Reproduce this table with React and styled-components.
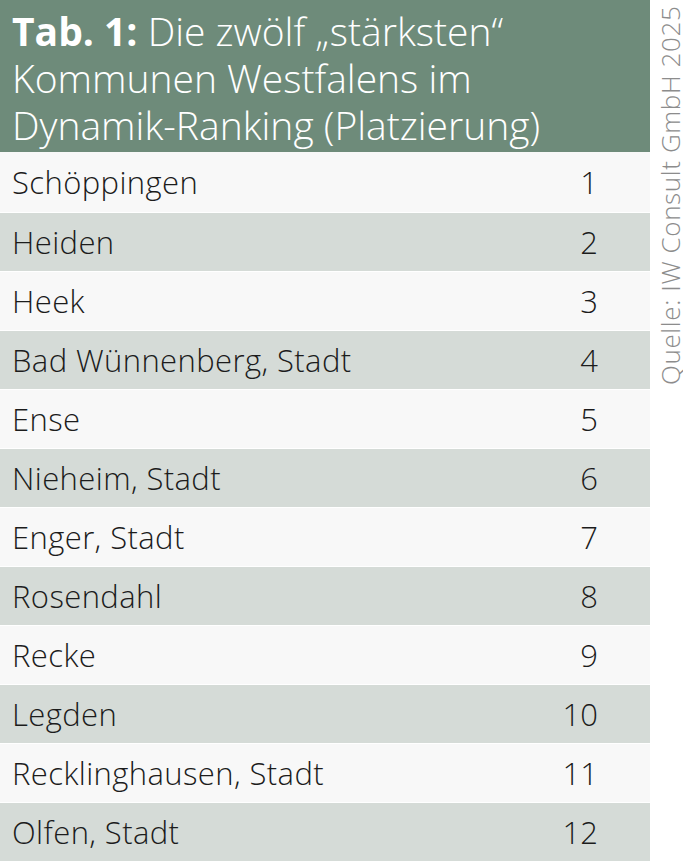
import React from "react";
import styled, { createGlobalStyle } from "styled-components";

const GlobalStyle = createGlobalStyle`
  html, body {
    margin: 0;
    padding: 0;
    background: #ffffff;
  }
  body {
    font-family: "Open Sans", "Liberation Sans", sans-serif;
  }
`;

// Kommunen mit Platzierung
const ranking = [
  "Schöppingen",
  "Heiden",
  "Heek",
  "Bad Wünnenberg, Stadt",
  "Ense",
  "Nieheim, Stadt",
  "Enger, Stadt",
  "Rosendahl",
  "Recke",
  "Legden",
  "Recklinghausen, Stadt",
  "Olfen, Stadt",
];

const App = () => {
  return (
    <>
      <GlobalStyle />
      <Page>
        <Table>
          <Header>
            <b>Tab. 1:</b> Die zwölf „stärksten“ Kommunen Westfalens im
            Dynamik-Ranking (Platzierung)
          </Header>
          {ranking.map((name, i) => (
            <Row key={name} $shaded={i % 2 === 1}>
              <Name>{name}</Name>
              <Rank>{i + 1}</Rank>
            </Row>
          ))}
        </Table>
        <Source>
          <span>Quelle: IW Consult GmbH 2025</span>
        </Source>
      </Page>
    </>
  );
};

const Page = styled.div`
  display: flex;
  width: 683px;
  height: 863px;
  overflow: hidden;
`;

const Table = styled.div`
  width: 650px;
  flex-shrink: 0;
  display: flex;
  flex-direction: column;
`;

const Header = styled.div`
  background: #6e8b7a;
  color: #ffffff;
  height: 152px;
  box-sizing: border-box;
  padding: 7px 60px 0 12px;
  font-size: 39px;
  font-weight: 300;
  line-height: 47px;
  b {
    font-weight: 700;
  }
`;

const Row = styled.div`
  display: flex;
  align-items: center;
  justify-content: space-between;
  height: 58px;
  margin-top: 1px;
  padding: 0 52px 0 12px;
  background: ${(p) => (p.$shaded ? "#d5dbd7" : "#f8f8f8")};
  color: #1c1c1c;
  font-size: 31px;
  font-weight: 350;
  &:nth-child(2) {
    margin-top: 0;
    height: 60px;
  }
`;

const Name = styled.span`
  letter-spacing: 0.4px;
`;

const Rank = styled.span`
  font-variant-numeric: tabular-nums;
`;

const Source = styled.div`
  flex: 1;
  display: flex;
  align-items: flex-start;
  padding-left: 5px;
  span {
    writing-mode: vertical-rl;
    transform: rotate(180deg);
    color: #8c8c8c;
    font-size: 26px;
    font-weight: 300;
    letter-spacing: 0.6px;
    height: 385px;
    line-height: 30px;
    white-space: nowrap;
  }
`;

export default App;
